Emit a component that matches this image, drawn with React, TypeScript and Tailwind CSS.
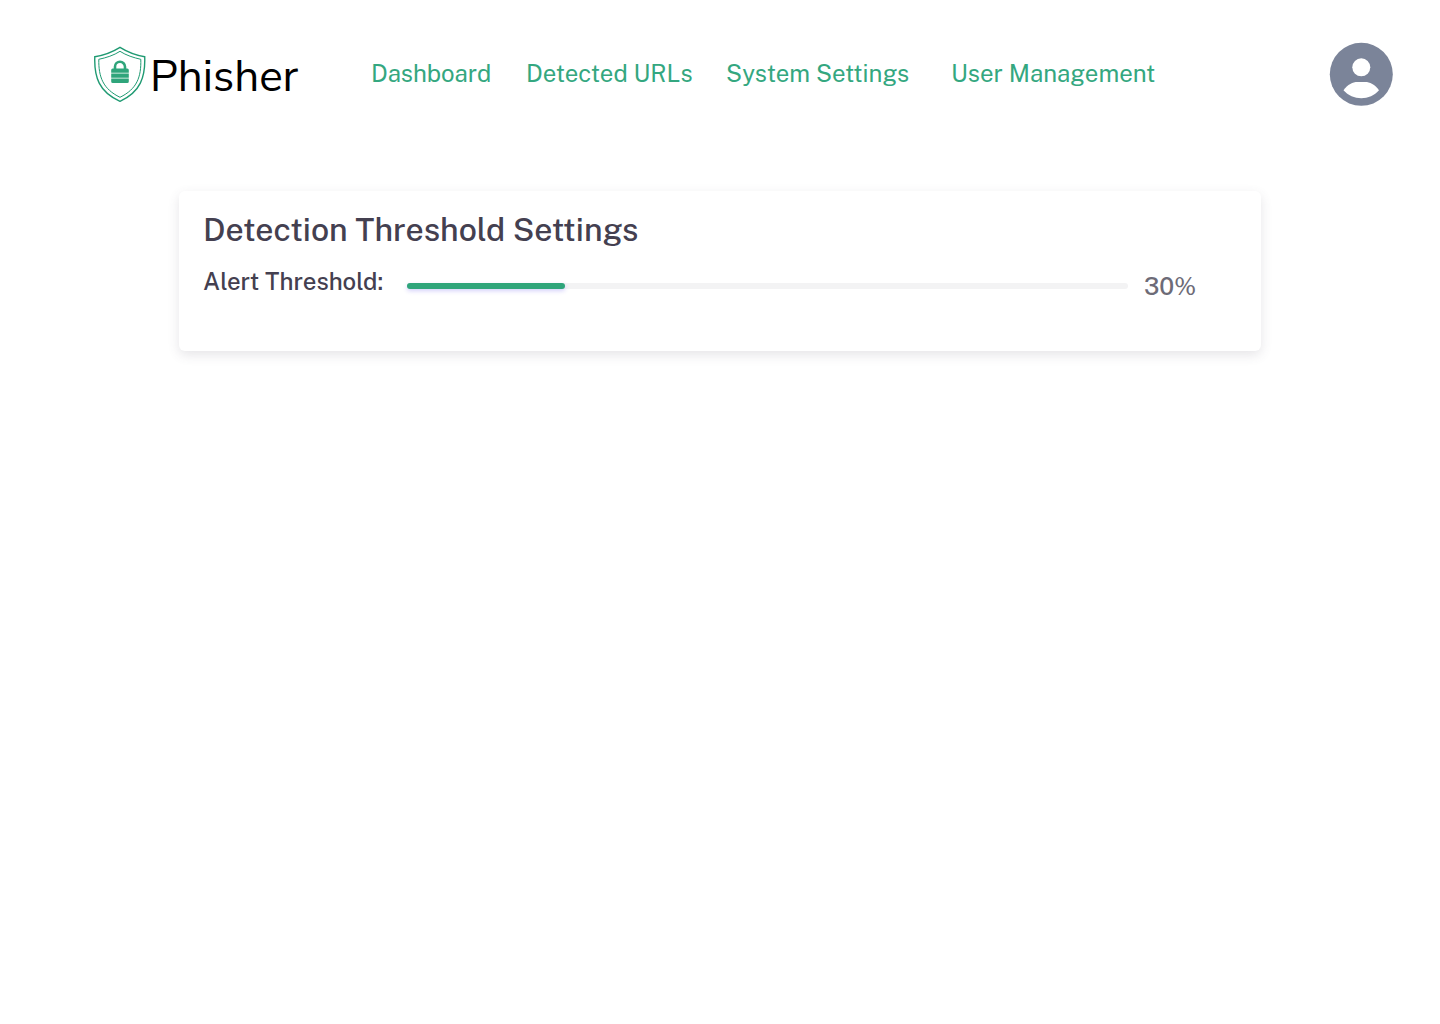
import { useState } from "react";

const MIN = 10;
const MAX = 101;

function ShieldLogo() {
  return (
    <svg viewBox="0 0 52 56" className="h-14 w-[52px] shrink-0" fill="none" aria-hidden="true">
      <path
        d="M26 1.300C19 5.700 10 9.200 0.800 10.700C0 31 5 46 26 55.300C46.500 46 51.500 31 50.700 10.700C42 9.200 33 5.700 26 1.300Z"
        stroke="#1f9a72"
        strokeWidth="1.400"
      />
      <path
        d="M26 5.300C20 9.300 12 11.800 4.800 13.300C4.500 31 9 43 26 51.300C43 43 47.300 31 46.800 13.300C40 11.800 32 9.300 26 5.300Z"
        stroke="#1f9a72"
        strokeWidth="1"
      />
      <path d="M21 24V20.800A5 5 0 0 1 31 20.800V24" stroke="#2fa57b" strokeWidth="2.600" />
      <path
        d="M18.700 22.500H33.300Q34.800 22.500 34.800 24V26.700H17.200V24Q17.200 22.500 18.700 22.500ZM17.200 27.500H34.800V31.700H17.200ZM17.200 32.500H34.800V35.500Q34.800 37 33.300 37H18.700Q17.200 37 17.200 35.500Z"
        fill="#2fa57b"
      />
    </svg>
  );
}

function Avatar() {
  return (
    <svg viewBox="0 0 64 64" className="size-16" aria-hidden="true">
      <circle cx="32.300" cy="32.300" r="31.500" fill="#7b8499" />
      <circle cx="32.300" cy="25.300" r="9" fill="#fff" />
      <path
        d="M14.500 48.200C18.500 42.300 24 40 28.300 40H36.300C40.500 40 46 42.300 50 48.200C45.500 53.300 39 56.200 32.300 56.200S19 53.300 14.500 48.200Z"
        fill="#fff"
      />
    </svg>
  );
}

export default function App() {
  const [threshold, setThreshold] = useState(30);
  const fill = ((threshold - MIN) / (MAX - MIN)) * 100;

  return (
    <div className="min-h-screen bg-white font-['Public_Sans','Inter',sans-serif]">
      <header className="flex items-center pt-[42px] pr-[47px] pl-[94px]">
        <a href="#" className="flex w-[277px] shrink-0 items-center gap-1 text-black">
          <ShieldLogo />
          <span className="pt-1.5 font-['Nunito_Sans','Lato',sans-serif] text-[44px] leading-[50px]">
            Phisher
          </span>
        </a>
        <nav className="grid grid-cols-[155px_200px_225px_auto] pb-0.5 text-2xl whitespace-nowrap text-[#34a780]">
          <a href="#">Dashboard</a>
          <a href="#">Detected URLs</a>
          <a href="#">System Settings</a>
          <a href="#">User Management</a>
        </nav>
        <button type="button" aria-label="Account" className="ml-auto shrink-0">
          <Avatar />
        </button>
      </header>

      <main className="px-[179px] pt-[85px]">
        <section className="rounded-md bg-white px-6 pt-[19px] pb-[49px] shadow-[0_4px_12px_rgba(75,70,92,0.14)]">
          <h1 className="text-[32px] leading-10 font-medium text-[#444050]">
            Detection Threshold Settings
          </h1>
          <div className="mt-[15px] flex items-start">
            <label htmlFor="threshold" className="w-[204px] shrink-0 text-2xl font-medium text-[#444050]">
              Alert Threshold:
            </label>
            <div className="relative mt-[18px] h-1.5 flex-1 rounded-full bg-[#f3f3f4]">
              <div
                className="h-full rounded-full bg-[#2fa57b] shadow-[0_2px_4px_rgba(115,103,240,0.3)]"
                style={{ width: `${fill}%` }}
              />
              <input
                id="threshold"
                type="range"
                min={MIN}
                max={MAX}
                value={threshold}
                onChange={(e) => setThreshold(Number(e.target.value))}
                className="absolute inset-0 m-0 size-full cursor-pointer opacity-0"
              />
            </div>
            <output htmlFor="threshold" className="mt-[5px] ml-4 w-[93px] text-2xl font-medium text-[#6d6b77]">
              {threshold}%
            </output>
          </div>
        </section>
      </main>
    </div>
  );
}
